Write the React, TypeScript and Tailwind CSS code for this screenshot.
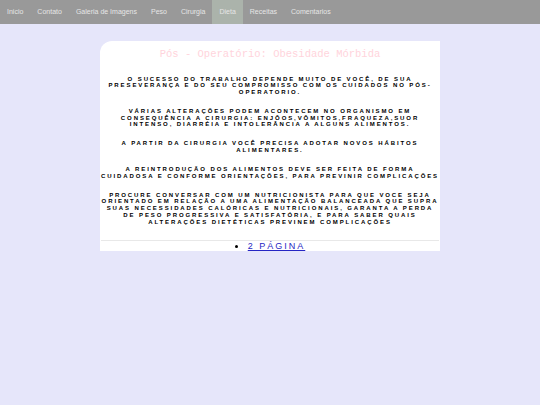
const navItems = ['Inicio', 'Contato', 'Galeria de Imagens', 'Peso', 'Cirurgia', 'Dieta', 'Receitas', 'Comentarios'];

const paragraphs = [
  'O sucesso do trabalho depende muito de você, de sua preseverança e do seu compromisso com os cuidados no pós-operatorio.',
  'Várias alterações podem acontecem no organismo em consequência a cirurgia: enjôos,vômitos,fraqueza,suor intenso, diarréia e intolerância a alguns alimentos.',
  'A partir da cirurgia você precisa adotar novos hábitos alimentares.',
  'A reintrodução dos alimentos deve ser feita de forma cuidadosa e conforme orientações, para previnir complicações',
  'Procure conversar com um nutricionista para que voce seja orientado em relação a uma alimentação balanceada que supra suas necessidades calóricas e nutricionais, garanta a perda de peso progressiva e satisfatória, e para saber quais alterações dietéticas previnem complicações',
];

function NavBar() {
  return (
    <nav className="flex h-[24px] bg-[#999999]">
      {navItems.map((item) => (
        <a
          key={item}
          href="#"
          className={
            'flex items-center px-[7px] text-[7px] text-[#e6e6e6] ' +
            (item === 'Dieta' ? 'bg-[#abb3ab]' : '')
          }
        >
          {item}
        </a>
      ))}
    </nav>
  );
}

export default function App() {
  return (
    <div className="min-h-[405px] bg-[#e6e6fa] font-['Liberation_Sans',Arial,sans-serif]">
      <NavBar />
      <div className="mx-auto mt-[17px] w-[340px] rounded-tl-[12px] bg-white">
        <h1 className="pt-[7px] text-center font-['Liberation_Mono','Courier_New',monospace] text-[10.5px] leading-[12px] text-[#ffd4dc]">
          Pós - Operatório: Obesidade Mórbida
        </h1>
        <div className="mt-[15.5px] flex flex-col gap-[12.3px] px-[1px]">
          {paragraphs.map((p, i) => (
            <p
              key={i}
              className="text-center text-[6px] font-bold uppercase leading-[6.7px] tracking-[1.9px] text-black"
            >
              {p}
            </p>
          ))}
        </div>
        <hr className="mx-[1px] mt-[14.5px] border-t border-[#e8e8e8]" />
        <ul className="list-inside list-disc text-center text-[9px] leading-[10px] text-black">
          <li>
            <a href="#" className="tracking-[2px] text-[#2626c4] underline">
              2 PÁGINA
            </a>
          </li>
        </ul>
      </div>
    </div>
  );
}
